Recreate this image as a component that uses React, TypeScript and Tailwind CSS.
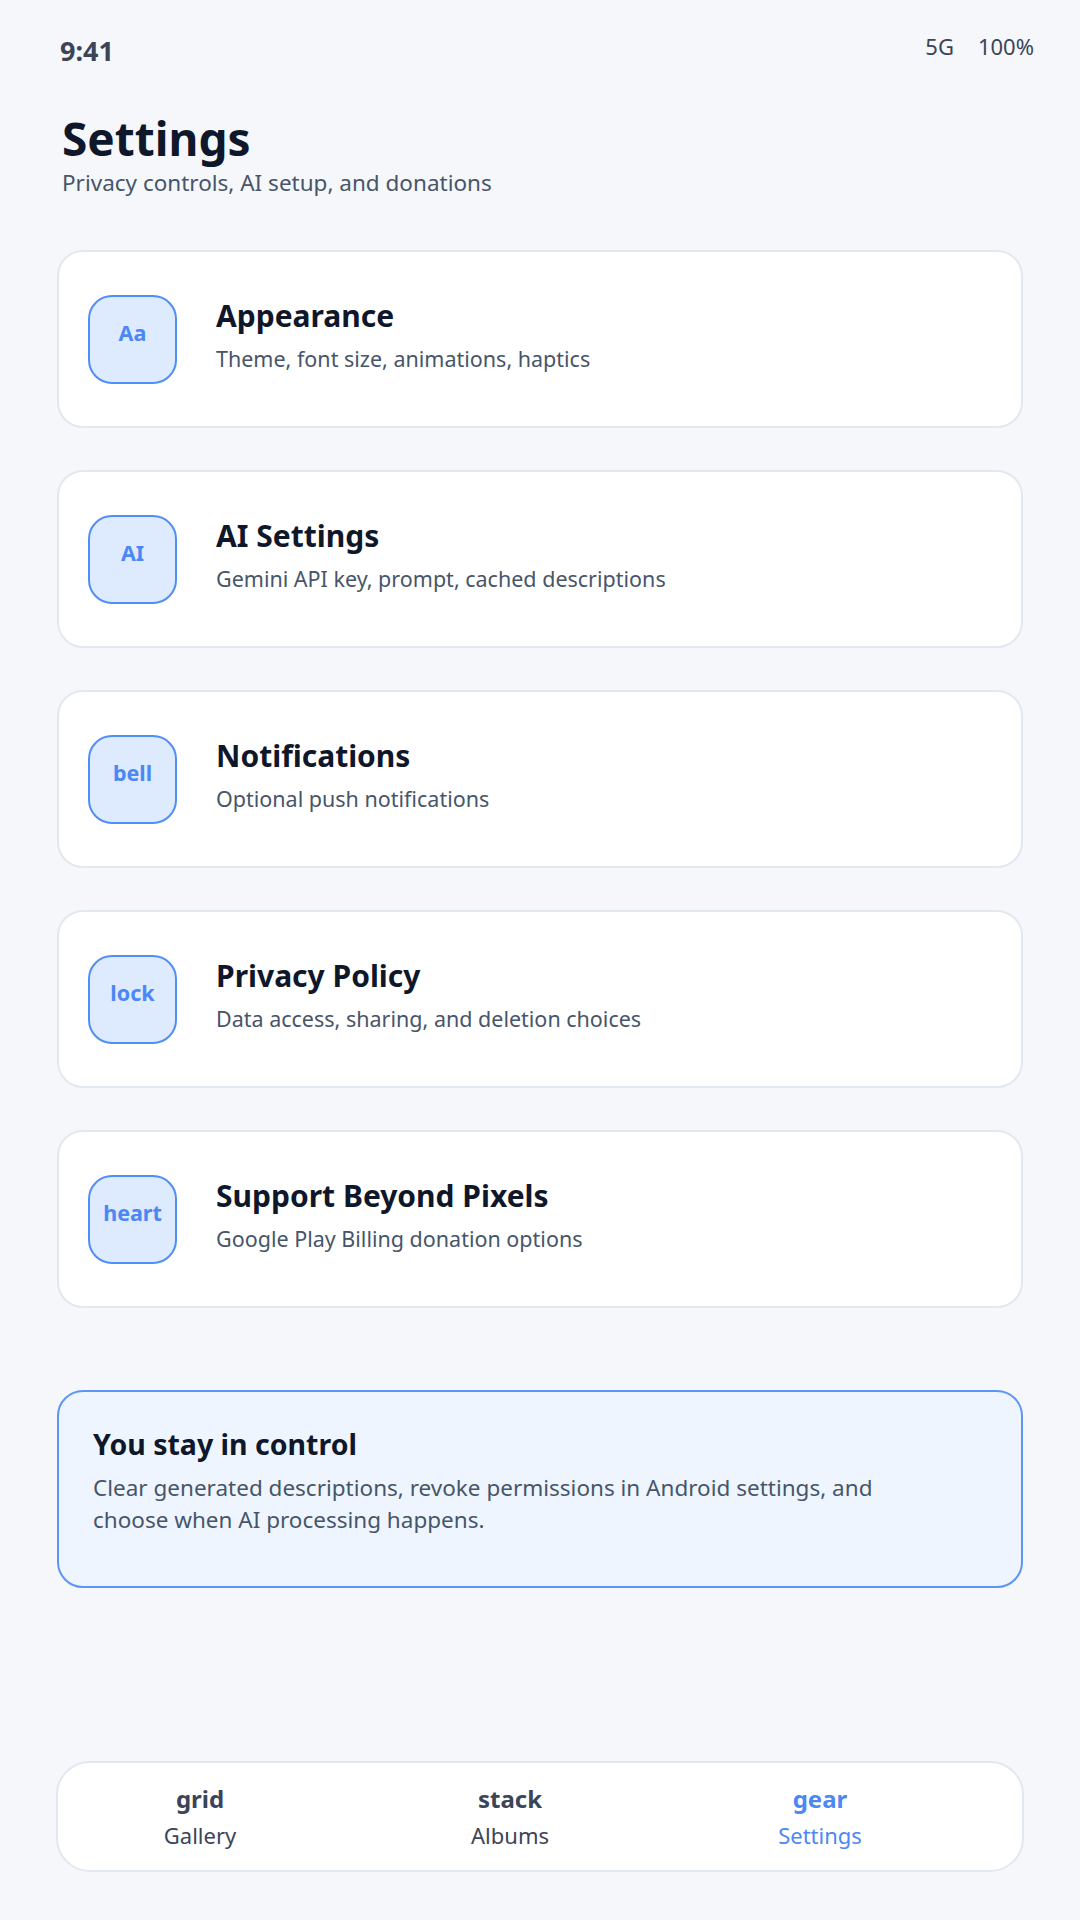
import React from "react";

const items = [
  { icon: "Aa", title: "Appearance", sub: "Theme, font size, animations, haptics" },
  { icon: "AI", title: "AI Settings", sub: "Gemini API key, prompt, cached descriptions" },
  { icon: "bell", title: "Notifications", sub: "Optional push notifications" },
  { icon: "lock", title: "Privacy Policy", sub: "Data access, sharing, and deletion choices" },
  { icon: "heart", title: "Support Beyond Pixels", sub: "Google Play Billing donation options" },
];

export default function App() {
  return (
    <div
      className="min-h-[1920px] w-[1080px] bg-[#f5f7fb] flex flex-col"
      style={{ fontFamily: '"Noto Sans", "Open Sans", sans-serif' }}
    >
      <div className="flex justify-between items-start pl-[60px] pr-[46px] pt-[30px] h-[67px]">
        <div className="mt-[5px] text-[27px] leading-[32px] font-bold text-[#3b4557]">9:41</div>
        <div className="flex gap-[24px] text-[22px] leading-[32px] text-[#3b4557]">
          <span>5G</span>
          <span>100%</span>
        </div>
      </div>

      <div className="mt-[44px] pl-[62px]">
        <h1 className="text-[46px] leading-[54px] font-bold text-[#0f172a]">Settings</h1>
        <p className="mt-[3px] text-[22.5px] leading-[30px] text-[#475569]">
          Privacy controls, AI setup, and donations
        </p>
      </div>

      <div className="mt-[52px] px-[57px] flex flex-col gap-[42px]">
        {items.map((it) => (
          <div
            key={it.title}
            className="h-[178px] bg-white border-2 border-[#e2e8f0] rounded-[26px] flex items-center pl-[29px]"
          >
            <div className="w-[89px] h-[89px] shrink-0 rounded-[24px] border-2 border-[#4f8ef7] bg-[#deeafd] flex items-center justify-center pb-[12px] text-[21.5px] font-bold text-[#4b87f5]">
              {it.icon}
            </div>
            <div className="ml-[39px] flex flex-col pb-[6px]">
              <div className="text-[30px] leading-[36px] font-bold text-[#0f172a]">{it.title}</div>
              <div className="mt-[10px] text-[21.5px] leading-[30px] text-[#475569]">{it.sub}</div>
            </div>
          </div>
        ))}
      </div>

      <div className="mt-[82px] mx-[57px] rounded-[26px] border-2 border-[#5b96f7] bg-[#eef5ff] pl-[34px] pr-[32px] pt-[34px] pb-[50px]">
        <div className="text-[28.5px] leading-[36px] font-bold text-[#0f172a]">You stay in control</div>
        <p className="mt-[10px] max-w-[830px] text-[22.5px] leading-[32px] text-[#475569]">
          Clear generated descriptions, revoke permissions in Android settings, and choose when AI processing happens.
        </p>
      </div>

      <div className="mt-auto mb-[48px] mx-[56px] h-[111px] rounded-[34px] border-2 border-[#e2e8f0] bg-white flex items-center gap-[110px] pl-[42px]">
        {[
          { i: "grid", l: "Gallery", a: false },
          { i: "stack", l: "Albums", a: false },
          { i: "gear", l: "Settings", a: true },
        ].map((n) => (
          <div key={n.l} className="w-[200px] shrink-0 flex flex-col items-center">
            <div
              className={
                "text-[24px] leading-[30px] font-bold " + (n.a ? "text-[#4b87f5]" : "text-[#3b4557]")
              }
            >
              {n.i}
            </div>
            <div
              className={
                "mt-[7px] text-[22px] leading-[28px] " + (n.a ? "text-[#4b87f5]" : "text-[#3b4557]")
              }
            >
              {n.l}
            </div>
          </div>
        ))}
      </div>
    </div>
  );
}
